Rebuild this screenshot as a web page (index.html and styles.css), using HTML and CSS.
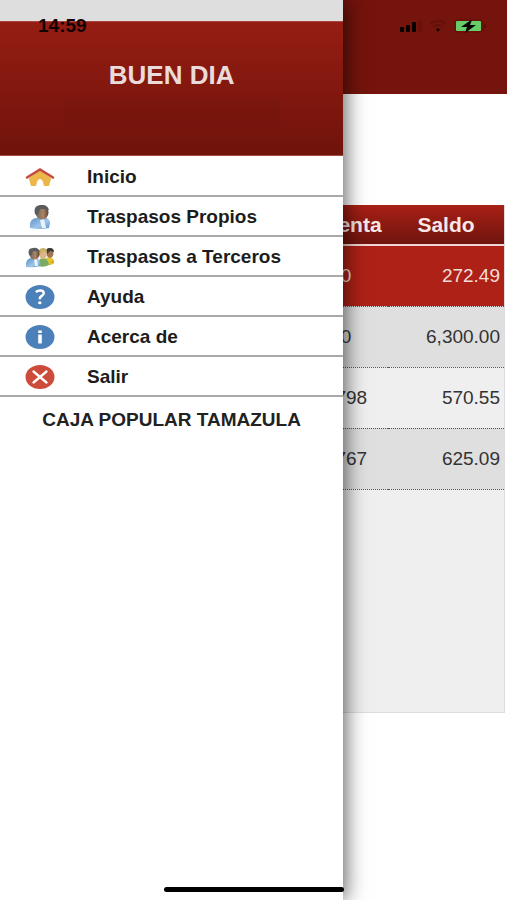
FILE: index.html
```html
<!DOCTYPE html>
<html lang="es">
<head>
<meta charset="utf-8">
<meta name="viewport" content="width=device-width, initial-scale=1">
<title>Caja Popular Tamazula</title>
<link rel="stylesheet" href="styles.css">
</head>
<body>
<main class="page">
  <header class="page-header"></header>
  <section class="accounts">
    <table>
      <colgroup><col><col class="col-account"><col class="col-balance"></colgroup>
      <thead>
        <tr><th></th><th>Cuenta</th><th>Saldo</th></tr>
      </thead>
      <tbody>
        <tr class="selected"><td></td><td>0</td><td class="amount">272.49</td></tr>
        <tr><td></td><td>0</td><td class="amount">6,300.00</td></tr>
        <tr><td></td><td>1798</td><td class="amount">570.55</td></tr>
        <tr><td></td><td>1767</td><td class="amount">625.09</td></tr>
      </tbody>
    </table>
  </section>
</main>

<aside class="drawer">
  <div class="drawer-top"></div>
  <header class="drawer-header">
    <h1>BUEN DIA</h1>
    <div class="user-name"></div>
  </header>
  <nav>
    <a href="#inicio">
      <svg class="icon" viewBox="0 0 30 24" aria-hidden="true">
        <path d="M4 13 15 5l11 8v1l-2 7h-5l-1-4q-1-3-3-3t-3 3l-1 4H6L4 14z" fill="#edb64b"/>
        <path d="M2 12.500 15 4.500l13 8" fill="none" stroke="#c24a40" stroke-width="2.600" stroke-linecap="round"/>
      </svg>
      <span>Inicio</span>
    </a>
    <a href="#propios">
      <svg class="icon" viewBox="0 0 30 24" aria-hidden="true">
        <defs>
          <linearGradient id="coat" x1="0" x2="1" y2="1"><stop stop-color="#5b8fc4"/><stop offset=".6" stop-color="#9dc5ea"/><stop offset="1" stop-color="#5f95ce"/></linearGradient>
          <linearGradient id="skin"><stop stop-color="#6d625b"/><stop offset=".6" stop-color="#ab8466"/><stop offset="1" stop-color="#5c4030"/></linearGradient>
        </defs>
        <path d="M5 23q-1-9 6-10l7-1q7 1 7 6l-1 5q-9 2-19 0z" fill="url(#coat)"/>
        <path d="m15 15 4-1 2 9h-4z" fill="#e9f3fb"/>
        <ellipse cx="17" cy="7.500" rx="6.500" ry="7" fill="url(#skin)"/>
        <path d="M10 9Q8 1 15 0q7-1 9 5-5-1-9-1-1 4-3 6z" fill="#5a5b5e"/>
      </svg>
      <span>Traspasos Propios</span>
    </a>
    <a href="#terceros">
      <svg class="icon" viewBox="0 0 30 24" aria-hidden="true">
        <path d="M19 20q-1-7 5-8 6 1 5 6l-3 2z" fill="#e2c62e"/>
        <ellipse cx="25" cy="8" rx="3.500" ry="5" fill="#a57552"/>
        <path d="M21 8q-1-5 4-5 4 0 4 4l-4-1-3 3z" fill="#3c3a36"/>
        <path d="M13 21q0-8 5-8 5 0 6 7-5 3-11 1z" fill="#79ac62"/>
        <ellipse cx="18" cy="9" rx="4" ry="5" fill="#ddb78b"/>
        <path d="M14 9q-1-6 4-6 4 0 4 4l-4-1-3 4z" fill="#c9b166"/>
        <path d="M1 22q-1-8 5-9h5q5 1 4 8-6 2-14 1z" fill="url(#coat)"/>
        <path d="m9 14 3 0 1 7h-3z" fill="#e9f3fb"/>
        <ellipse cx="9.500" cy="9" rx="5" ry="5.500" fill="url(#skin)"/>
        <path d="M4 10Q2 3 8 3q5-1 7 4-5-1-7-1l-2 5z" fill="#5a5b5e"/>
        <circle cx="27.500" cy="17" r="1.500" fill="#ee9b28"/>
      </svg>
      <span>Traspasos a Terceros</span>
    </a>
    <a href="#ayuda">
      <svg class="icon" viewBox="0 0 30 24" aria-hidden="true">
        <ellipse cx="15" cy="12" rx="14.500" ry="12" fill="#4c80b8"/>
        <path d="M10.800 7Q13 5.500 15.200 5.500q3.500 0 3.500 2.700 0 1.600-2.200 2.900-1.700 1-1.700 2.700v.5" fill="none" stroke="#fff" stroke-width="2.500"/>
        <ellipse cx="14.800" cy="17.700" rx="1.700" ry="1.500" fill="#fff"/>
      </svg>
      <span>Ayuda</span>
    </a>
    <a href="#acerca">
      <svg class="icon" viewBox="0 0 30 24" aria-hidden="true">
        <ellipse cx="15" cy="12" rx="14.500" ry="12" fill="#4c80b8"/>
        <path d="M13.200 9.500h3.600V18.500h-3.600zM13.200 5.500h3.600v2.500h-3.600z" fill="#fff"/>
      </svg>
      <span>Acerca de</span>
    </a>
    <a href="#salir">
      <svg class="icon" viewBox="0 0 30 24" aria-hidden="true">
        <ellipse cx="15" cy="12" rx="14.500" ry="12" fill="#cd4b3a"/>
        <path d="m8.500 6.500 13 11m0-11-13 11" stroke="#fff" stroke-width="2.300" stroke-linecap="round"/>
      </svg>
      <span>Salir</span>
    </a>
  </nav>
  <p class="brand">CAJA POPULAR TAMAZULA</p>
</aside>

<div class="status-bar">
  <time>14:59</time>
  <svg viewBox="0 0 86 14" aria-hidden="true">
    <g fill="#080101"><rect y="8" width="4" height="5" rx="1"/><rect x="6" y="6" width="4" height="7" rx="1"/><rect x="12" y="3" width="4" height="10" rx="1"/></g>
    <rect x="18" y="1" width="4" height="12" rx="1" fill="#69110a"/>
    <path d="M30 5q8-6 16 0M33 8q5-4 10 0" fill="none" stroke="#66100a" stroke-width="2"/>
    <path d="m38 13-2-3q2-1 4 0z" fill="#080101"/>
    <rect x="55" y="1" width="28" height="12" rx="3" fill="none" stroke="#640f09"/>
    <path d="M85 5v4" stroke="#540d07" stroke-width="1.500"/>
    <rect x="56" y="2" width="25" height="10" rx="1" fill="#67cd68"/>
    <path d="m71 1-10 7h6l-2 6 11-8h-6l2-5z" fill="#080101"/>
  </svg>
</div>
<div class="home-indicator"></div>
</body>
</html>
```
FILE: styles.css
```css
* {
  box-sizing: border-box;
}

body {
  margin: 0;
  min-height: 100vh;
  position: relative;
  overflow: hidden;
  background: #fff;
  color: #222;
  font-family: "Liberation Sans", Arial, sans-serif;
  font-size: 19px;
}

.page-header {
  height: 94px;
  background: #74140c;
}

.accounts {
  min-height: 508px;
  margin: 111px 2px 0 0;
  background: #efefef;
  border-right: 1px solid #ddd;
  border-bottom: 1px solid #ddd;
}

table {
  width: 100%;
  table-layout: fixed;
  border-collapse: collapse;
}

.col-account {
  width: 84px;
}

.col-balance {
  width: 116px;
}

th {
  height: 40px;
  padding: 0;
  background: linear-gradient(#a81f15, #6f150e);
  border-bottom: 2px solid #f0d5d2;
  color: #f5e8e7;
  font-size: 21px;
}

td {
  height: 61px;
  padding: 0;
  border-bottom: 1px dotted #555;
  color: #333;
  text-align: center;
}

tbody tr:nth-child(even) {
  background: #dfdfdf;
}

.selected {
  background: #ae2116;
}

.selected td {
  color: #f3dedc;
}

td.amount {
  padding-right: 4px;
  text-align: right;
}

.drawer {
  position: absolute;
  top: 0;
  bottom: 0;
  left: 0;
  width: 67.7%;
  background: #fff;
  box-shadow: 2px 0 20px rgba(0, 0, 0, 0.65);
}

.drawer-top {
  height: 21px;
  background: #dedede;
}

.drawer-header {
  height: 135px;
  padding-top: 40px;
  background: linear-gradient(#951d13, #70130b);
  border-top: 1px solid #aa4840;
  border-bottom: 1px solid #a64c47;
}

h1 {
  margin: 0;
  color: #eadcdb;
  font-size: 26px;
  line-height: 26px;
  text-align: center;
}

.user-name {
  width: 63%;
  height: 27px;
  margin: 12px auto 0;
  background: rgba(112, 19, 11, 0.35);
}

nav {
  padding-top: 1px;
}

nav a {
  display: flex;
  align-items: center;
  gap: 32px;
  height: 40px;
  padding: 2px 0 0 25px;
  border-bottom: 2px solid #aaa;
  color: #1c1c1c;
  font-weight: bold;
  text-decoration: none;
}

.icon {
  width: 30px;
  height: 24px;
}

.brand {
  margin: 11px 0 0;
  color: #222;
  font-weight: bold;
  line-height: 24px;
  text-align: center;
}

.status-bar {
  position: absolute;
  top: 16px;
  left: 38px;
  right: 21px;
  display: flex;
  align-items: center;
  justify-content: space-between;
  color: #110302;
  font-weight: bold;
  line-height: 20px;
}

.status-bar svg {
  width: 86px;
  height: 14px;
}

.home-indicator {
  position: absolute;
  bottom: 8px;
  left: 50%;
  width: 180px;
  height: 5px;
  margin-left: -90px;
  border-radius: 3px;
  background: #000;
}
```
